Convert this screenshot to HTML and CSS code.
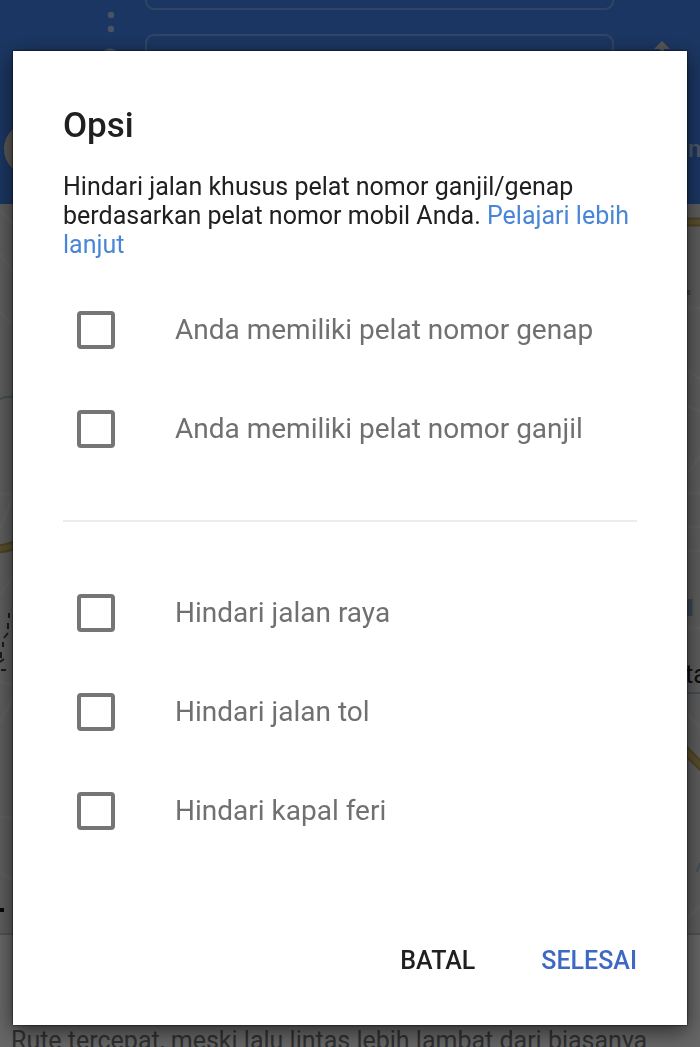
FILE: index.html
```html
<!DOCTYPE html>
<html lang="id">
<head>
  <meta charset="UTF-8" />
  <meta name="viewport" content="width=device-width, initial-scale=1" />
  <title>Opsi rute</title>
  <link rel="stylesheet" href="styles.css">
</head>
<body>

  <div class="page">
    <header class="search">
      <div class="route">
        <svg class="route-dots" width="20" height="108" viewBox="0 0 20 108">
          <circle cx="10" cy="15" r="3.2" fill="#fff" fill-opacity=".6" />
          <circle cx="10" cy="29" r="3.2" fill="#fff" fill-opacity=".6" />
          <circle cx="9" cy="58" r="8" fill="none" stroke="#fff" stroke-opacity=".7" stroke-width="3" />
        </svg>
        <div class="fields">
          <div class="field field-from"></div>
          <div class="field"></div>
        </div>
        <svg class="swap" width="20" height="108" viewBox="0 0 20 108">
          <path d="M10 41 L18 49 H12 V66 H8 V49 H2 Z" fill="#d9d9d9" />
        </svg>
      </div>
      <div class="modes">
        <span class="mode-active"></span>
        <span class="mode">mnt</span>
      </div>
    </header>

    <main class="map">
      <svg class="map-lines" viewBox="0 0 700 729" preserveAspectRatio="none">
        <g fill="none" stroke="#fff" stroke-opacity=".4" stroke-width="3">
          <path d="M0 6 L16 24 M0 50 L20 76 M0 108 L20 128 M0 290 H20 M0 325 L14 290 M0 390 L16 370" />
          <path d="M0 478 L20 483 M0 518 L16 488 M0 613 H14 M0 668 L14 678" />
          <path d="M684 104 H700 M684 165 L700 175 M684 200 L700 208 M684 275 L700 252 M684 289 H700 M684 323 H700 M684 347 H700 M684 424 H700" />
          <path d="M684 506 L700 524 M684 718 L700 702" />
        </g>
        <g fill="none" stroke="#c2a35a" stroke-width="9">
          <path d="M-4 345 Q6 345 20 339" />
          <path d="M680 18 H704" />
          <path d="M680 541 L704 565" />
        </g>
        <g fill="none" stroke="#dcc274" stroke-width="5">
          <path d="M-4 345 Q6 345 20 339" />
          <path d="M680 18 H704" />
          <path d="M680 541 L704 565" />
        </g>
        <g fill="none" stroke="#a9c4d0" stroke-width="2">
          <path d="M0 195 Q8 191 20 194 M684 489 H700 M697 668 L700 659" />
        </g>
        <path d="M688 86 V91 M690 395 V412" stroke="#94aed6" stroke-width="5" />
        <path d="M9 409 V414 M8 419 V425 M8 429 L4 434 M3 438 V443 M1 448 V454 M4 455 L0 458 M1 466 H6" fill="none" stroke="#444" stroke-width="2" />
        <path d="M0 706 H4" stroke="#111" stroke-width="4" />
      </svg>
      <span class="place">tangerang</span>
    </main>

    <section class="summary">
      <p>Rute tercepat, meski lalu lintas lebih lambat dari biasanya</p>
    </section>
  </div>

  <div class="scrim">
    <form class="dialog" role="dialog" aria-labelledby="judul">
      <h1 id="judul">Opsi</h1>
      <p class="intro">Hindari jalan khusus pelat nomor ganjil/genap berdasarkan pelat nomor mobil Anda. <a href="#">Pelajari lebih lanjut</a></p>

      <div class="options">
        <label class="option"><input type="checkbox" name="genap" /> Anda memiliki pelat nomor genap</label>
        <label class="option"><input type="checkbox" name="ganjil" /> Anda memiliki pelat nomor ganjil</label>
      </div>

      <hr />

      <div class="options options-avoid">
        <label class="option"><input type="checkbox" name="raya" /> Hindari jalan raya</label>
        <label class="option"><input type="checkbox" name="tol" /> Hindari jalan tol</label>
        <label class="option"><input type="checkbox" name="feri" /> Hindari kapal feri</label>
      </div>

      <div class="actions">
        <button type="button">BATAL</button>
        <button type="submit" class="primary">SELESAI</button>
      </div>
    </form>
  </div>

</body>
</html>
```

FILE: styles.css
```css
* {
  box-sizing: border-box;
}
body {
  margin: 0;
  font-family: Roboto, sans-serif;
  color: #202020;
}
.page {
  display: flex;
  flex-direction: column;
  height: 100vh;
  overflow: hidden;
}

/* header */
.search {
  height: 204px;
  background: #4487f5;
  overflow: hidden;
}
.route {
  display: flex;
  padding: 0 28px 0 101px;
}
.fields {
  flex: 1;
  margin: 0 38px 0 24px;
}
.field {
  height: 72px;
  border: 2px solid rgba(255, 255, 255, .3);
  border-radius: 9px;
}
.field-from {
  height: 10px;
  margin-bottom: 24px;
  border-top: 0;
  border-radius: 0 0 9px 9px;
}
.modes {
  display: flex;
  align-items: center;
  justify-content: space-between;
  padding: 14px 0 0 4px;
}
.mode-active {
  width: 150px;
  height: 54px;
  border-radius: 27px;
  background: #dedad5;
}
.mode {
  width: 12px;
  font-size: 24px;
  font-weight: 500;
  color: #c4d7f8;
}

/* map */
.map {
  position: relative;
  flex: 1;
  background: #e8e8e8;
  overflow: hidden;
}
.map-lines {
  display: block;
  width: 100%;
  height: 100%;
}
.place {
  position: absolute;
  top: 456px;
  left: calc(100% - 15px);
  font-size: 25px;
  color: #222;
}

.summary {
  height: 114px;
  padding: 92px 11px 0;
  background: #fff;
  border-top: 2px solid #ccc;
}
.summary p {
  margin: 0;
  font-size: 25px;
  line-height: 28px;
  white-space: nowrap;
  color: #777;
}

/* dialog */
.scrim {
  position: fixed;
  inset: 0;
  display: flex;
  flex-direction: column;
  justify-content: center;
  padding: 29px 13px 0;
  background: rgba(0, 0, 0, .6);
}
.dialog {
  padding: 55px 50px 43px;
  background: #fff;
  box-shadow: 0 6px 20px rgba(0, 0, 0, .6), 0 0 2px #000;
}
h1 {
  margin: 0 0 26px;
  font-size: 35px;
  font-weight: 500;
  line-height: 40px;
}
.intro {
  margin: 0;
  font-size: 25px;
  line-height: 29px;
}
.intro a {
  color: #4a86d8;
  text-decoration: none;
}
.options {
  padding: 21px 14px 42px;
}
.options-avoid {
  padding: 41px 14px 80px;
}
.option {
  display: flex;
  align-items: center;
  gap: 60px;
  height: 99px;
  font-size: 28px;
  color: #707070;
}
.option input {
  appearance: none;
  width: 38px;
  height: 38px;
  margin: 0;
  border: 4px solid #757575;
  border-radius: 4px;
}
.option input:checked {
  background: #3d68c4;
}
hr {
  height: 2px;
  margin: 0;
  border: 0;
  background: #ececec;
}
.actions {
  display: flex;
  justify-content: flex-end;
  gap: 66px;
}
.actions button {
  padding: 0;
  border: 0;
  background: none;
  font-family: inherit;
  font-size: 25px;
  font-weight: 500;
  line-height: 42px;
  color: #202020;
}
.actions .primary {
  color: #3d68c4;
}
```
